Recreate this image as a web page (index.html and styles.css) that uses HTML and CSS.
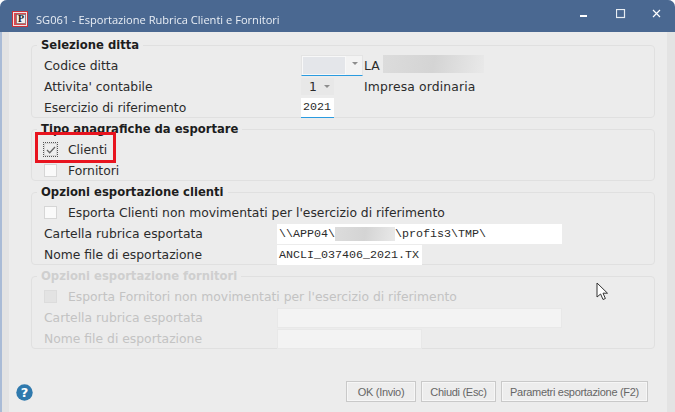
FILE: index.html
```html
<!DOCTYPE html>
<html lang="it">
<head>
<meta charset="utf-8">
<title>SG061 - Esportazione Rubrica Clienti e Fornitori</title>
<link rel="stylesheet" href="styles.css">
</head>
<body>
<div class="window">
  <header class="titlebar">
    <svg class="app-icon" width="16" height="16" viewBox="0 0 16 16"><rect x="0.5" y="0.5" width="15" height="15" fill="#efe6e6" stroke="#c8323a"/><rect x="2" y="2" width="12" height="12" fill="#d94a50"/><rect x="4.5" y="3.5" width="9" height="9" fill="#f1efef" stroke="#666" stroke-width="0.6"/><text x="6" y="11.3" class="app-letter">P</text></svg>
    <span class="title">SG061 - Esportazione Rubrica Clienti e Fornitori</span>
    <div class="controls">
      <svg width="10" height="10" viewBox="0 0 10 10"><rect x="0" y="6" width="7" height="2" fill="#fff"/></svg>
      <svg width="10" height="10" viewBox="0 0 10 10"><rect x="0.5" y="0.5" width="8" height="8" fill="none" stroke="#e8edf3" stroke-width="1.2"/></svg>
      <svg width="10" height="10" viewBox="0 0 10 10"><path d="M1 1 8 8M8 1 1 8" stroke="#fff" stroke-width="1.2"/></svg>
    </div>
  </header>
  <main class="client">
    <fieldset class="group g1">
      <legend>Selezione ditta</legend>
      <div class="row">
        <span class="label wide">Codice ditta</span>
        <span class="combo"><span class="combo-text"></span><span class="arrow"></span></span>
        <span class="after">LA</span><span class="redact r-name"></span>
      </div>
      <div class="row">
        <span class="label wide">Attivita' contabile</span>
        <span class="spin">1<span class="arrow"></span></span>
        <span class="after desc">Impresa ordinaria</span>
      </div>
      <div class="row">
        <span class="label wide">Esercizio di riferimento</span>
        <span class="input year">2021</span>
      </div>
    </fieldset>

    <fieldset class="group g2">
      <legend>Tipo anagrafiche da esportare</legend>
      <div class="row check-row">
        <span class="check focus"><svg width="10" height="8" viewBox="0 0 10 8"><path d="M1 4 3.7 6.7 9 1" fill="none" stroke="#666" stroke-width="1.3"/></svg></span>
        <span>Clienti</span>
      </div>
      <div class="row check-row">
        <span class="check"></span><span>Fornitori</span>
      </div>
    </fieldset>

    <fieldset class="group g3">
      <legend>Opzioni esportazione clienti</legend>
      <div class="row check-row">
        <span class="check"></span><span>Esporta Clienti non movimentati per l'esercizio di riferimento</span>
      </div>
      <div class="row">
        <span class="label">Cartella rubrica esportata</span>
        <span class="input path">\\APP04\<span class="redact r-path"></span>\profis3\TMP\</span>
      </div>
      <div class="row">
        <span class="label">Nome file di esportazione</span>
        <span class="input file">ANCLI_037406_2021.TX</span>
      </div>
    </fieldset>

    <fieldset class="group g4 disabled">
      <legend>Opzioni esportazione fornitori</legend>
      <div class="row check-row">
        <span class="check"></span><span>Esporta Fornitori non movimentati per l'esercizio di riferimento</span>
      </div>
      <div class="row">
        <span class="label">Cartella rubrica esportata</span>
        <span class="input path"></span>
      </div>
      <div class="row">
        <span class="label">Nome file di esportazione</span>
        <span class="input file"></span>
      </div>
    </fieldset>

    <footer class="footer">
      <svg class="help" width="17" height="17" viewBox="0 0 17 17"><circle cx="8.5" cy="8.5" r="8.2" fill="#2f79ad"/><text x="8.5" y="13.2" class="help-mark">?</text></svg>
      <div class="buttons">
        <button class="btn b-ok" type="button">OK (Invio)</button>
        <button class="btn b-close" type="button">Chiudi (Esc)</button>
        <button class="btn b-params" type="button">Parametri esportazione (F2)</button>
      </div>
    </footer>
  </main>
  <div class="highlight"></div>
  <svg class="cursor" width="15" height="20" viewBox="0 0 15 20"><path d="M1 1V15L4.6 12 7 17.5 9.4 16.5 7 11.2H11.5Z" fill="#fff" stroke="#333" stroke-width="1"/></svg>
</div>
</body>
</html>
```
FILE: styles.css
```css
* { box-sizing: border-box; }
html, body { margin: 0; padding: 0; }
body { width: 675px; height: 412px; overflow: hidden; background: #fff; font-family: "DejaVu Sans", sans-serif; font-size: 12.35px; color: #2b2b2b; }

.window { position: relative; width: 675px; height: 412px; background: #a9bbd6; border-radius: 7px 7px 0 0; overflow: hidden; padding: 0 0 0 2px; filter: blur(0.3px); }
.titlebar { height: 32px; margin: 0 0 0 -2px; background: #4a6891; color: #e9eef5; display: flex; align-items: center; padding: 6px 0 0 12px; }
.app-icon { flex: none; }
.app-letter { font-family: "Liberation Serif", serif; font-size: 10px; font-weight: 700; fill: #222; }
.title { margin-left: 8px; font-family: "Open Sans", sans-serif; font-size: 11.1px; }
.controls { margin-left: auto; display: flex; gap: 26px; padding-right: 13px; margin-top: -10px; }

.client { height: 380px; background: #ececec; padding: 6px 20px 0 29px; display: flex; flex-direction: column; position: relative; }
.client::before { content: ""; position: absolute; left: 0; top: 0; width: 7px; height: 100%; background: #e3e3e3; }
.client::after { content: ""; position: absolute; right: 0; top: 0; width: 8px; height: 100%; background: #e3e3e3; }

.group { margin: 4px 0 0; width: 624px; height: 80px; border: 1px solid #e0e0e0; border-radius: 4px; padding: 3px 0 0; min-width: 0; flex: none; }
.group legend { margin-left: 5px; padding: 0 4px; font-weight: 700; font-size: 11.6px; line-height: 14px; color: #1d1d1d; }
.g1 { margin-top: 0; }
.g2 { height: 59px; }

.row { display: flex; align-items: center; height: 21px; padding-left: 12px; }
.label { width: 233px; flex: none; }
.label.wide { width: 257px; }
.check-row { gap: 11px; }
.check { flex: none; width: 13px; height: 13px; background: #fafafa; border: 1px solid #d6d6d6; display: flex; align-items: center; justify-content: center; }
.check.focus { outline: 1px dotted #555; background: #eee; }

.input { display: flex; align-items: center; background: #fff; height: 20px; font-family: "Liberation Mono", monospace; font-size: 11.67px; color: #2b2b2b; padding-left: 2px; white-space: nowrap; }
.year { width: 33px; border-bottom: 1px solid #2a9be0; }
.path { width: 285px; }
.file { width: 145px; overflow: hidden; }
.combo { width: 62px; height: 21px; display: flex; background: #f3f3f3; border: 1px solid #e4e4e4; border-bottom: 1px solid #2a9be0; }
.combo-text { width: 44px; background: #e4e6ea; border: 1px solid #f8f8f8; }
.arrow { display: inline-block; width: 0; height: 0; border-left: 3px solid transparent; border-right: 3px solid transparent; border-top: 3px solid #8d8d8d; margin: 6px 0 0 6px; }
.spin { width: 33px; height: 17px; background: #e8e8e8; padding-left: 8px; display: flex; align-items: center; }
.spin .arrow { margin: 0 0 0 7px; }
.after { margin-left: 1px; color: #2b2b2b; }
.desc { margin-left: 30px; letter-spacing: 0.15px; }
.redact { display: inline-block; background: linear-gradient(100deg, #dcdcdc, #d4d4d4 50%, #e9e9e9); }
.r-name { width: 101px; height: 18px; margin-left: 3px; margin-bottom: 3px; }
.r-path { width: 60px; height: 14px; }

.disabled legend { color: #cfcfcf; }
.disabled .row { color: #c3c3c3; }
.disabled .check { background: #e3e3e3; border-color: #dcdcdc; }
.disabled .input { background: #f3f3f3; border: 1px solid #e8e8e8; }

.footer { display: flex; justify-content: space-between; align-items: flex-start; padding: 32px 7px 0 0; flex: 1; margin-left: -15px; width: 639px; }
.help { flex: none; margin-top: 3px; }
.help-mark { font-family: "DejaVu Sans", sans-serif; font-size: 13px; font-weight: 700; fill: #fff; text-anchor: middle; }
.buttons { display: flex; gap: 5px; }
.btn { height: 21px; padding: 0; background: #ededed; border: 1px solid #c9c9c9; font-family: "Liberation Sans", sans-serif; font-size: 11px; letter-spacing: -0.3px; color: #666; box-shadow: inset 0 0 0 1px #f6f6f6; }
.b-ok { width: 70px; }
.b-close { width: 75px; }
.b-params { width: 147px; }

.highlight { position: absolute; left: 35px; top: 132px; width: 81px; height: 31px; border: 3px solid #e8141f; }
.cursor { position: absolute; left: 596px; top: 282px; }
```
